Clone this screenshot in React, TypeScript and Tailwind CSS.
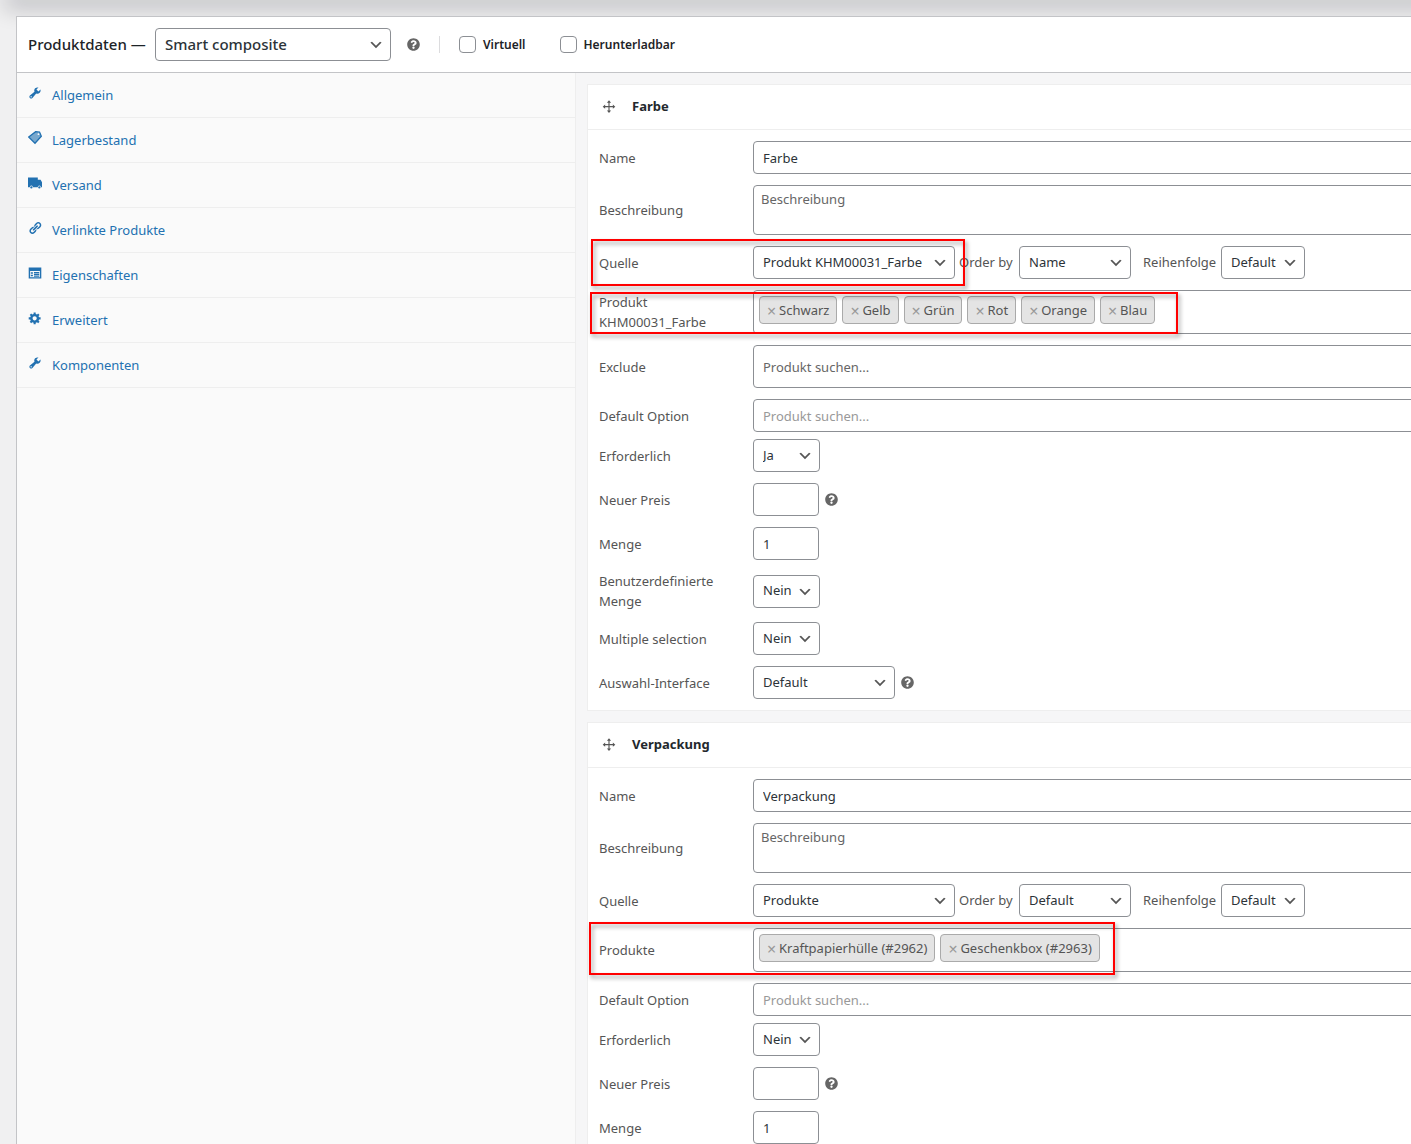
import type { ReactNode } from 'react';
import clsx from 'clsx';
import { FaQuestionCircle } from 'react-icons/fa';

const icons: Record<string, ReactNode> = {
  tools: (
    <path d="M16.68 9.77c-1.34 1.34-3.3 1.67-4.95.99l-5.41 6.52c-.99.99-2.59.99-3.58 0s-.99-2.59 0-3.57l6.52-5.42c-.68-1.65-.35-3.61.99-4.95 1.28-1.28 3.12-1.62 4.72-1.06l-2.89 2.89 2.82 2.82 2.86-2.87c.53 1.58.18 3.39-1.08 4.65zM3.81 16.21c.4.39 1.04.39 1.43 0 .4-.4.4-1.04 0-1.43-.39-.4-1.03-.4-1.43 0-.39.39-.39 1.03 0 1.43z" />
  ),
  tag: (
    <>
      <path d="M1 8.500 11 0l7 3.500 1 4.500-9 9.500z" fillOpacity="0.6" />
      <path d="M1 8.500 11 1l5.500.5L19 7.500 10 17.500z" fill="none" stroke="currentColor" strokeWidth="1.8" />
      <circle cx="15" cy="4.500" r="1.300" fill="#fafafa" />
    </>
  ),
  truck: (
    <path d="M0 2h14v3.500h4l2 3.500v7h-1.500a2.300 2.300 0 0 0-4.600 0H7.100a2.300 2.300 0 0 0-4.600 0H0zM4.800 14.500a1.700 1.700 0 1 1 0 3.400 1.700 1.700 0 0 1 0-3.400zm11.400 0a1.700 1.700 0 1 1 0 3.400 1.700 1.700 0 0 1 0-3.400z" />
  ),
  link: (
    <path d="M17.74 2.76c1.68 1.69 1.68 4.41 0 6.1l-1.53 1.52c-1.12 1.12-2.7 1.47-4.14 1.09l2.62-2.61.76-.77.76-.76c.84-.84.84-2.2 0-3.04-.84-.85-2.2-.85-3.04 0l-.77.76-3.38 3.38c-.37-1.44-.02-3.02 1.1-4.14l1.52-1.53c1.69-1.68 4.42-1.68 6.1 0zM8.59 13.43l5.34-5.34c.42-.42.42-1.1 0-1.52-.44-.43-1.13-.39-1.53 0l-5.33 5.34c-.42.42-.42 1.1 0 1.52.44.43 1.13.39 1.52 0zm-.76 2.29l4.14-4.15c.38 1.44.03 3.02-1.09 4.14l-1.52 1.53c-1.69 1.68-4.41 1.68-6.1 0-1.68-1.68-1.68-4.42 0-6.1l1.53-1.52c1.12-1.12 2.7-1.47 4.14-1.1l-4.14 4.15c-.85.84-.85 2.2 0 3.05.84.84 2.2.84 3.04 0z" />
  ),
  table: (
    <path fillRule="evenodd" d="M1 2h18v16H1zM3 7v9h14V7zM4 9h3v2H4zm0 3.500h3v2H4zM8.500 8.500H16v1.800H8.500zm0 2.500H16v1.800H8.500zm0 2.500H16v1.800H8.500z" />
  ),
  gear: (
    <path d="M18 12h-2.180c-.17.7-.44 1.350-.81 1.930l1.540 1.540-2.100 2.100-1.540-1.540c-.58.36-1.230.63-1.910.79V19H8v-2.180c-.68-.16-1.330-.43-1.910-.79l-1.540 1.540-2.120-2.120 1.540-1.540c-.36-.58-.63-1.230-.79-1.910H1V9.030h2.170c.16-.7.44-1.350.8-1.940L2.430 5.550l2.100-2.100 1.540 1.540c.58-.37 1.240-.64 1.930-.81V2h3v2.180c.68.16 1.330.43 1.910.79l1.540-1.540 2.120 2.120-1.540 1.540c.36.59.64 1.240.8 1.940H18V12zm-8.500 1.500c1.660 0 3-1.340 3-3s-1.340-3-3-3-3 1.340-3 3 1.340 3 3 3z" />
  ),
  move: (
    <path d="M19 9.500l-3.500 3v-2.200h-4.700v4.700H13l-3 3.500-3-3.500h2.200v-4.700H4.500v2.200L1 9.500l3.500-3v2.200h4.700V4H7l3-3.500L13 4h-2.200v4.700h4.700V6.500z" />
  ),
};

const tabs = [
  { label: 'Allgemein', icon: 'tools' },
  { label: 'Lagerbestand', icon: 'tag' },
  { label: 'Versand', icon: 'truck' },
  { label: 'Verlinkte Produkte', icon: 'link' },
  { label: 'Eigenschaften', icon: 'table' },
  { label: 'Erweitert', icon: 'gear' },
  { label: 'Komponenten', icon: 'tools' },
];

const control = 'rounded border border-[#8c8f94] bg-white text-[#2c3338]';

function Icon({ name, className }: { name: string; className?: string }) {
  return (
    <svg viewBox="0 0 20 20" fill="currentColor" className={clsx('shrink-0', className)}>
      {icons[name]}
    </svg>
  );
}

function Help() {
  return (
    <button type="button" aria-label="Hilfe" className="text-[#666]">
      <FaQuestionCircle className="size-[13px]" />
    </button>
  );
}

type SelectProps = { id: string; value: string; width: string; large?: boolean };

function Select({ id, value, width, large }: SelectProps) {
  return (
    <div className={clsx('relative shrink-0', width)}>
      <select
        id={id}
        className={clsx(control, 'block h-[33px] w-full appearance-none pl-[9px]', large && 'text-[15px] font-medium')}
      >
        <option>{value}</option>
      </select>
      <svg viewBox="0 0 20 20" fill="#555" className="pointer-events-none absolute top-[9px] right-[7px] size-4">
        <path d="M5 6l5 5 5-5 2 1-7 7-7-7 2-1z" />
      </svg>
    </div>
  );
}

type RowProps = { label: string; id?: string; className?: string; mark?: string; children: ReactNode };

function Row({ label, id, className, mark, children }: RowProps) {
  return (
    <div className={clsx('relative flex items-center', className)}>
      <label htmlFor={id} className="w-[154px] shrink-0 pr-6 leading-5">
        {label}
      </label>
      <div className="flex min-w-0 flex-1 items-center">{children}</div>
      {mark && (
        <div
          className={clsx(
            'pointer-events-none absolute border-2 border-[#f00] drop-shadow-[2px_3px_2px_rgba(0,0,0,0.4)]',
            mark,
          )}
        />
      )}
    </div>
  );
}

function Tags({ items }: { items: string[] }) {
  return (
    <div className={clsx(control, 'flex h-11 w-full items-start gap-[5px] p-[5px]')}>
      {items.map((item) => (
        <span
          key={item}
          className="flex h-7 items-center gap-[3px] rounded border border-[#aaa] bg-[#e4e4e4] px-[7px] pt-0.5 whitespace-nowrap text-[#555]"
        >
          <button type="button" aria-label={`${item} entfernen`} className="w-[9px] text-center text-base leading-5 text-[#999]">
            ×
          </button>
          {item}
        </span>
      ))}
    </div>
  );
}

type ComponentCardProps = {
  id: string;
  title: string;
  source: string;
  orderBy: string;
  sourceMark?: string;
  tagsLabel: string;
  tags: string[];
  tagsMark: string;
  exclude?: boolean;
  required: string;
  more?: boolean;
};

function ComponentCard(props: ComponentCardProps) {
  const { id, title, source, orderBy, sourceMark, tagsLabel, tags, tagsMark, exclude, required, more } = props;

  return (
    <section className="border border-[#eee] bg-white">
      <header className="flex h-[45px] items-center gap-4 border-b border-[#eee] px-[14px]">
        <Icon name="move" className="size-3.5 text-[#555]" />
        <h3 className="font-bold text-[#23282d]">{title}</h3>
      </header>
      <div className="flex flex-col gap-[11px] p-[11px]">
        <Row label="Name" id={`${id}-name`}>
          <input id={`${id}-name`} defaultValue={title} className={clsx(control, 'h-[33px] w-full px-[9px]')} />
        </Row>
        <Row label="Beschreibung" id={`${id}-desc`}>
          <textarea
            id={`${id}-desc`}
            placeholder="Beschreibung"
            className={clsx(control, 'h-[50px] w-full resize-none px-[7px] py-[3px] leading-5 placeholder:text-[#666]')}
          />
        </Row>
        <Row label="Quelle" id={`${id}-source`} mark={sourceMark}>
          <Select id={`${id}-source`} value={source} width="w-[202px]" />
          <label htmlFor={`${id}-orderby`} className="w-16 shrink-0 pl-1">
            Order by
          </label>
          <Select id={`${id}-orderby`} value={orderBy} width="w-28" />
          <label htmlFor={`${id}-order`} className="w-[90px] shrink-0 pl-3">
            Reihenfolge
          </label>
          <Select id={`${id}-order`} value="Default" width="w-[84px]" />
        </Row>
        <Row label={tagsLabel} mark={tagsMark}>
          <Tags items={tags} />
        </Row>
        {exclude && (
          <Row label="Exclude" id={`${id}-exclude`}>
            <input
              id={`${id}-exclude`}
              placeholder="Produkt suchen..."
              className={clsx(control, 'h-[43px] w-full px-[9px] placeholder:text-[#666]')}
            />
          </Row>
        )}
        <Row label="Default Option" id={`${id}-default`} className="-mb-1">
          <input
            id={`${id}-default`}
            placeholder="Produkt suchen..."
            className={clsx(control, 'h-[33px] w-full px-[9px] placeholder:text-[#999]')}
          />
        </Row>
        <Row label="Erforderlich" id={`${id}-required`}>
          <Select id={`${id}-required`} value={required} width="w-[67px]" />
        </Row>
        <Row label="Neuer Preis" id={`${id}-price`}>
          <input id={`${id}-price`} className={clsx(control, 'mr-1.5 h-[33px] w-[66px] px-[9px]')} />
          <Help />
        </Row>
        <Row label="Menge" id={`${id}-qty`}>
          <input id={`${id}-qty`} defaultValue="1" className={clsx(control, 'h-[33px] w-[66px] px-[9px]')} />
        </Row>
        {more && (
          <>
            <Row label="Benutzerdefinierte Menge" id={`${id}-custom`}>
              <Select id={`${id}-custom`} value="Nein" width="w-[67px]" />
            </Row>
            <Row label="Multiple selection" id={`${id}-multiple`}>
              <Select id={`${id}-multiple`} value="Nein" width="w-[67px]" />
            </Row>
            <Row label="Auswahl-Interface" id={`${id}-interface`}>
              <div className="mr-1.5">
                <Select id={`${id}-interface`} value="Default" width="w-[142px]" />
              </div>
              <Help />
            </Row>
          </>
        )}
      </div>
    </section>
  );
}

export default function App() {
  return (
    <div className="h-screen overflow-hidden bg-[#f0f0f1] font-['Noto_Sans','Open_Sans',sans-serif] text-[13px] text-[#555]">
      {/* shadow of the sticky bar above */}
      <div className="-mr-8 ml-3 h-0 shadow-[0_0_22px_8px_rgba(0,10,20,0.24)]" />

      <main className="relative mt-4 -mr-8 ml-4 border border-[#c3c4c7] bg-white">
        <header className="flex h-14 items-center border-b border-[#c3c4c7] pl-[11px] text-[#1d2327]">
          <label htmlFor="product-type" className="w-[127px] text-[15px] font-medium whitespace-nowrap">
            Produktdaten —
          </label>
          <Select id="product-type" value="Smart composite" width="w-[236px]" large />
          <div className="ml-4 flex h-[17px] items-center border-r border-[#dcdcde] pr-[19px]">
            <Help />
          </div>
          <label className="ml-[19px] flex items-center gap-[7px] text-xs font-semibold">
            <input type="checkbox" className="size-[17px] appearance-none rounded border border-[#8c8f94] bg-white" />
            Virtuell
          </label>
          <label className="ml-[34px] flex items-center gap-[7px] text-xs font-semibold">
            <input type="checkbox" className="size-[17px] appearance-none rounded border border-[#8c8f94] bg-white" />
            Herunterladbar
          </label>
        </header>

        <div className="flex">
          <nav className="w-[559px] shrink-0 border-r border-[#eee] bg-[#fafafa]">
            <ul>
              {tabs.map((tab) => (
                <li key={tab.label} className="border-b border-[#eee]">
                  <a href="#" className="flex h-11 items-center gap-2.5 pt-0.5 pl-[11px] text-[#2271b1]">
                    <Icon name={tab.icon} className="mb-1.5 size-3.5" />
                    {tab.label}
                  </a>
                </li>
              ))}
            </ul>
          </nav>

          <div className="flex min-w-0 flex-1 flex-col gap-[11px] bg-[#f6f6f7] p-[11px]">
            <ComponentCard
              id="farbe"
              title="Farbe"
              source="Produkt KHM00031_Farbe"
              orderBy="Name"
              sourceMark="-inset-y-[7px] -left-2 w-[374px]"
              tagsLabel="Produkt KHM00031_Farbe"
              tags={['Schwarz', 'Gelb', 'Grün', 'Rot', 'Orange', 'Blau']}
              tagsMark="top-0.5 bottom-0 -left-[9px] w-[588px]"
              exclude
              required="Ja"
              more
            />
            <ComponentCard
              id="verpackung"
              title="Verpackung"
              source="Produkte"
              orderBy="Default"
              tagsLabel="Produkte"
              tags={['Kraftpapierhülle (#2962)', 'Geschenkbox (#2963)']}
              tagsMark="-top-1.5 -bottom-[3px] -left-2.5 w-[526px]"
              required="Nein"
            />
          </div>
        </div>
      </main>
    </div>
  );
}
